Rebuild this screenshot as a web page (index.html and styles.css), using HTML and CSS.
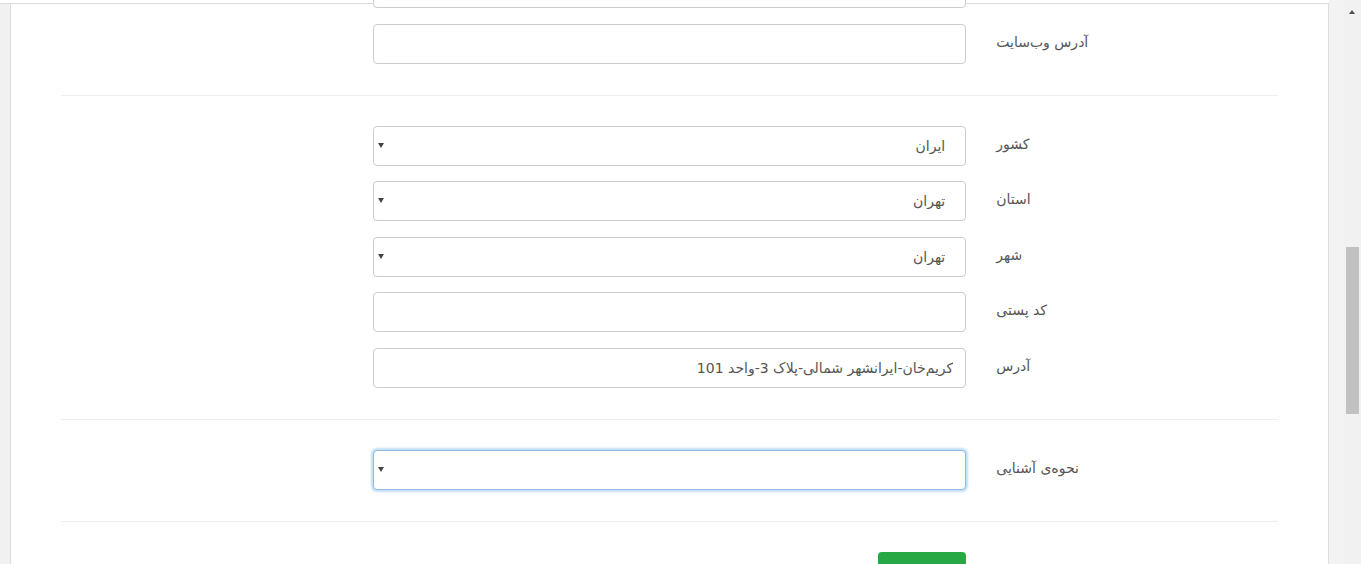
FILE: index.html
```html
<!DOCTYPE html>
<html lang="fa" dir="rtl">
<head>
    <meta charset="UTF-8">
    <meta name="viewport" content="width=device-width, initial-scale=1.0">
    <title>ویرایش پروفایل</title>
    <link rel="stylesheet" href="styles.css">
</head>
<body>

<div class="page">
    <div class="scrollbar">
        <span class="arrow-up"></span>
        <div class="thumb"></div>
    </div>
    <div class="side"></div>

    <div class="panel">
        <form class="form">
            <div class="row first-row">
                <div class="label"></div>
                <div class="field"><input class="control" type="text"></div>
            </div>
            <div class="row">
                <label class="label">آدرس وب‌سایت</label>
                <div class="field"><input class="control" type="text"></div>
            </div>

            <hr class="divider">

            <div class="row">
                <label class="label">کشور</label>
                <div class="field select-wrap">
                    <select class="control select"><option>ایران</option></select>
                </div>
            </div>
            <div class="row">
                <label class="label">استان</label>
                <div class="field select-wrap">
                    <select class="control select"><option>تهران</option></select>
                </div>
            </div>
            <div class="row">
                <label class="label">شهر</label>
                <div class="field select-wrap">
                    <select class="control select"><option>تهران</option></select>
                </div>
            </div>
            <div class="row">
                <label class="label">کد پستی</label>
                <div class="field"><input class="control" type="text"></div>
            </div>
            <div class="row">
                <label class="label">آدرس</label>
                <div class="field"><input class="control" type="text" value="کریم‌خان-ایرانشهر شمالی-پلاک 3-واحد 101"></div>
            </div>

            <hr class="divider">

            <div class="row">
                <label class="label">نحوه‌ی آشنایی</label>
                <div class="field select-wrap">
                    <select class="control select focused"><option></option></select>
                </div>
            </div>

            <hr class="divider">

            <div class="row">
                <div class="label"></div>
                <div class="field"><button class="btn-save" type="button">ذخیره</button></div>
            </div>
        </form>
    </div>

    <div class="gutter"></div>
</div>

</body>
</html>
```

FILE: styles.css
```css
html, body {
    margin: 0;
    padding: 0;
    height: 100%;
    overflow: hidden;
    background: #fff;
    font-family: "DejaVu Sans", sans-serif;
    font-size: 14px;
    color: #555;
}
.page {
    display: flex;
    height: 564px;
    direction: rtl;
}
.scrollbar {
    width: 17px;
    flex: none;
    background: #f1f1f1;
    position: relative;
}
.arrow-up {
    position: absolute;
    top: 10px;
    left: 5px;
    width: 0;
    height: 0;
    border-left: 3.5px solid transparent;
    border-right: 3.5px solid transparent;
    border-bottom: 4px solid #505050;
}
.thumb {
    position: absolute;
    top: 247px;
    left: 2px;
    width: 13px;
    height: 167px;
    background: #c1c1c1;
}
.side {
    width: 15px;
    flex: none;
    background: #f3f3f3;
}
.panel {
    flex: 1;
    margin-top: 3px;
    border-top: 1px solid #dcdcdc;
    border-right: 1px solid #dcdcdc;
    background: #fff;
    padding: 0 50px;
}
.gutter {
    width: 10px;
    flex: none;
    margin-top: 3px;
    border-top: 1px solid #dcdcdc;
    border-right: 1px solid #dcdcdc;
    background: #f1f1f1;
}
.form {
    margin: 0;
}
.row {
    display: flex;
    align-items: center;
    margin: 0 -15px 15.5px;
}
.first-row {
    margin-top: -36px;
}
.label {
    width: 25%;
    box-sizing: border-box;
    padding: 0 15px 4px;
    text-align: left;
    color: #555;
    font-size: 14px;
}
.field {
    width: 50%;
    box-sizing: border-box;
    padding: 0 15px;
}
.control {
    display: block;
    width: 100%;
    height: 40px;
    box-sizing: border-box;
    padding: 0 12px;
    border: 1px solid #ccc;
    border-radius: 4px;
    background: #fff;
    font-family: "DejaVu Sans", sans-serif;
    font-size: 14px;
    color: #555;
    direction: rtl;
    outline: none;
}
.select-wrap {
    position: relative;
}
.select-wrap::after {
    content: "";
    position: absolute;
    top: 17px;
    left: 20px;
    border-left: 3.5px solid transparent;
    border-right: 3.5px solid transparent;
    border-top: 5px solid #444;
    pointer-events: none;
}
.select {
    -webkit-appearance: none;
    appearance: none;
    padding-right: 20px;
}
.focused {
    border-color: #8ebbe6;
    box-shadow: 0 0 2px 2px rgba(102, 175, 233, 0.4);
}
.divider {
    border: 0;
    border-top: 1px solid #eee;
    margin: 31px 0 30px;
}
.btn-save {
    display: block;
    width: 88px;
    height: 40px;
    padding: 16px 0 0;
    border: none;
    border-radius: 4px;
    background: #28a745;
    color: #fff;
    font-family: "DejaVu Sans", sans-serif;
    font-size: 14px;
}
```
